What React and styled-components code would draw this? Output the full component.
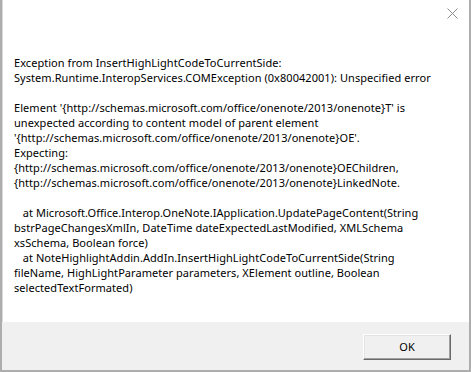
import React from "react";
import styled, { createGlobalStyle } from "styled-components";

const GlobalStyle = createGlobalStyle`
  html, body { margin: 0; padding: 0; background: #ffffff; }
  body { font-family: "Noto Sans", "Segoe UI", sans-serif; }
`;

const Window = styled.div`
  box-sizing: border-box;
  width: 471px;
  height: 372px;
  display: flex;
  flex-direction: column;
  background: #ffffff;
  border-left: 2px solid #adadad;
  border-right: 2px solid #adadad;
  border-bottom: 2px solid #adadad;
  box-shadow: inset 1px 0 0 #d9d9d9;
`;

const TitleBar = styled.div`
  height: 26px;
  display: flex;
  justify-content: flex-end;
  align-items: flex-start;
  padding: 8px 11px 0 0;
  box-sizing: border-box;
`;

const CloseIcon = styled.svg`
  width: 11px;
  height: 11px;
  display: block;
`;

const Body = styled.div`
  flex: 1;
  padding: 29px 0 0 12px;
`;

const Message = styled.div`
  font-family: "Noto Sans", sans-serif;
  font-size: 11px;
  letter-spacing: 0.05px;
  line-height: 15px;
  color: #000000;
  white-space: pre;
`;

const Footer = styled.div`
  height: 48px;
  background: #f0f0f0;
  display: flex;
  justify-content: flex-end;
  align-items: flex-start;
  padding: 12px 18px 0 0;
  box-sizing: border-box;
`;

const Button = styled.button`
  box-sizing: border-box;
  width: 88px;
  height: 26px;
  padding: 0;
  margin: 0;
  background: #f0f0f0;
  border-top: 1px solid #ffffff;
  border-left: 1px solid #ffffff;
  border-right: 1px solid #696969;
  border-bottom: 1px solid #696969;
  box-shadow: inset -1px -1px 0 #a0a0a0, inset 1px 1px 0 #e3e3e3;
  font-family: "Noto Sans", sans-serif;
  font-size: 11px;
  color: #000000;
  line-height: 24px;
`;

const lines = [
  "Exception from InsertHighLightCodeToCurrentSide:",
  "System.Runtime.InteropServices.COMException (0x80042001): Unspecified error",
  "",
  "Element '{http://schemas.microsoft.com/office/onenote/2013/onenote}T' is",
  "unexpected according to content model of parent element",
  "'{http://schemas.microsoft.com/office/onenote/2013/onenote}OE'.",
  "Expecting:",
  "{http://schemas.microsoft.com/office/onenote/2013/onenote}OEChildren,",
  "{http://schemas.microsoft.com/office/onenote/2013/onenote}LinkedNote.",
  "",
  "   at Microsoft.Office.Interop.OneNote.IApplication.UpdatePageContent(String",
  "bstrPageChangesXmlIn, DateTime dateExpectedLastModified, XMLSchema",
  "xsSchema, Boolean force)",
  "   at NoteHighlightAddin.AddIn.InsertHighLightCodeToCurrentSide(String",
  "fileName, HighLightParameter parameters, XElement outline, Boolean",
  "selectedTextFormated)",
];

export default function App() {
  return (
    <>
      <GlobalStyle />
      <Window>
        <TitleBar>
          <CloseIcon viewBox="0 0 11 11">
            <path d="M0.5 0.5 L10.5 10.5 M10.5 0.5 L0.5 10.5" stroke="#8a8a8a" strokeWidth="1" fill="none" />
          </CloseIcon>
        </TitleBar>
        <Body>
          <Message>{lines.join("\n")}</Message>
        </Body>
        <Footer>
          <Button>OK</Button>
        </Footer>
      </Window>
    </>
  );
}
